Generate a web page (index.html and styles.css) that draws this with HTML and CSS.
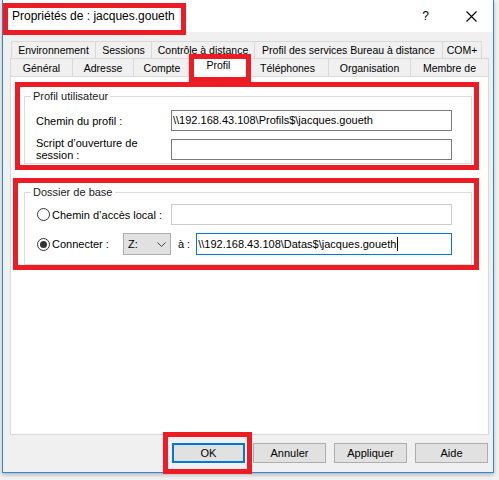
FILE: index.html
```html
<!DOCTYPE html>
<html lang="fr">
<head>
<meta charset="utf-8">
<title>Propriétés de : jacques.goueth</title>
<link rel="stylesheet" href="styles.css">
</head>
<body>
<div class="win">
  <div class="titlebar">
    <span class="title">Propriétés de : jacques.goueth</span>
    <span class="help">?</span>
    <svg class="close" width="11" height="11" viewBox="0 0 11 11"><path d="M0.5 0.5 L10.5 10.5 M10.5 0.5 L0.5 10.5" stroke="#000" stroke-width="1.1" fill="none"/></svg>
  </div>

  <div class="tabs">
    <div class="tabrow row1">
      <div class="tab w-env">Environnement</div>
      <div class="tab w-ses">Sessions</div>
      <div class="tab w-ctl">Contrôle à distance</div>
      <div class="tab w-prs">Profil des services Bureau à distance</div>
      <div class="tab w-com">COM+</div>
    </div>
    <div class="tabrow row2">
      <div class="tab w-gen">Général</div>
      <div class="tab w-adr">Adresse</div>
      <div class="tab w-cpt">Compte</div>
      <div class="tab sel w-pro">Profil</div>
      <div class="tab w-tel">Téléphones</div>
      <div class="tab w-org">Organisation</div>
      <div class="tab w-mem">Membre de</div>
    </div>
  </div>

  <div class="panel">
    <fieldset class="group g-profile">
      <legend>Profil utilisateur</legend>
      <div class="fields">
        <span class="lbl">Chemin du profil :</span>
        <div class="textbox">\\192.168.43.108\Profils$\jacques.goueth</div>
        <span class="lbl two">Script d’ouverture de<br>session :</span>
        <div class="textbox"></div>
      </div>
    </fieldset>

    <fieldset class="group g-home">
      <legend>Dossier de base</legend>
      <div class="fields">
        <div class="radioopt"><span class="radio"></span><span>Chemin d’accès local :</span></div>
        <div class="textbox dim"></div>
      </div>
      <div class="conn">
        <div class="radioopt wide"><span class="radio on"></span><span>Connecter :</span></div>
        <div class="select"><span>Z:</span><svg width="9" height="5" viewBox="0 0 9 5"><path d="M0.5 0.5 L4.5 4.5 L8.5 0.5" fill="none" stroke="#444"/></svg></div>
        <span class="a-lbl">à :</span>
        <div class="textbox focus">\\192.168.43.108\Datas$\jacques.goueth<span class="caret"></span></div>
      </div>
    </fieldset>
  </div>

  <div class="buttons">
    <div class="btn default">OK</div>
    <div class="btn">Annuler</div>
    <div class="btn">Appliquer</div>
    <div class="btn">Aide</div>
  </div>

  <div class="mark m-title"></div>
  <div class="mark m-tab"></div>
  <div class="mark m-prof"></div>
  <div class="mark m-home"></div>
  <div class="mark m-ok"></div>
</div>
</body>
</html>
```

FILE: styles.css
```css
* { box-sizing: border-box; }
html, body { margin: 0; }
body {
  width: 499px;
  height: 480px;
  overflow: hidden;
  padding-left: 2px;
  background: #f2f2f2;
  font-family: "Liberation Sans", Arial, sans-serif;
  font-size: 11px;
  color: #000;
}

.win {
  position: relative;
  width: 492px;
  height: 473px;
  background: #f0f0f0;
  border: 1px solid #2b88d8;
  border-top: 0;
  box-shadow: 0 2px 4px rgba(0, 0, 0, 0.25);
}

.titlebar {
  height: 32px;
  background: #fff;
  display: flex;
  align-items: center;
  padding: 0 16px 0 9px;
}
.title { flex: 1; font-size: 12px; }
.help { font-size: 12px; margin-right: 37px; }
.close { display: block; }

.tabs { margin-top: 9px; }
.tabrow { display: flex; align-items: flex-start; }
.row1 { height: 17px; margin-left: 8px; }
.row2 { height: 18px; margin-left: 7px; }
.tab {
  flex: none;
  border: 1px solid #d9d9d9;
  border-bottom: 0;
  background: #f0f0f0;
  text-align: center;
  white-space: nowrap;
  font-size: 10.5px;
}
.tab + .tab { margin-left: -1px; }
.row1 .tab { height: 17px; line-height: 17px; }
.row2 .tab { height: 18px; line-height: 18px; }
.row2 .tab.sel {
  height: 23px;
  margin-top: -4px;
  margin-left: -3px;
  background: #fff;
  line-height: 21px;
  z-index: 2;
}
.row2 .sel + .tab { margin-left: -3px; }

.w-env { width: 85px; }
.w-ses { width: 57px; }
.w-ctl { width: 104px; }
.w-prs { width: 189px; }
.w-com { width: 40px; }
.w-gen { width: 63px; }
.w-adr { width: 62px; }
.w-cpt { width: 58px; }
.w-pro { width: 61px; }
.w-tel { width: 83px; }
.w-org { width: 83px; }
.w-mem { width: 79px; }

.panel {
  margin-left: 7px;
  width: 479px;
  height: 359px;
  background: #fff;
  border: 1px solid #d9d9d9;
  padding-left: 13px;
}

.group {
  width: 448px;
  margin: 0;
  border: 1px solid #dcdcdc;
  min-inline-size: 0;
}
.group legend {
  padding: 0 2px;
  margin-left: -5px;
  line-height: 14px;
  color: #1a1a1a;
}
.g-profile { margin-top: 12px; padding: 7px 19px 2px 11px; }
.g-home { margin-top: 21px; padding: 5px 19px 9px 11px; }

.fields {
  display: grid;
  grid-template-columns: 135px 281px;
  row-gap: 6px;
  align-items: center;
}
.lbl.two { line-height: 12px; }

.textbox {
  height: 21px;
  border: 1px solid #7a7a7a;
  background: #fff;
  padding: 0 1px;
  line-height: 19px;
  white-space: nowrap;
  overflow: hidden;
}
.textbox.dim { border-color: #cccccc; }
.textbox.focus {
  width: 256px;
  height: 22px;
  line-height: 20px;
  border-color: #0078d7;
  margin-left: 6px;
}
.caret {
  display: inline-block;
  width: 1px;
  height: 14px;
  background: #000;
  vertical-align: -3px;
  margin-left: 1px;
}

.radioopt { display: flex; align-items: center; gap: 2px; margin-left: 1px; }
.radioopt.wide { width: 86px; }
.radio {
  width: 13px;
  height: 13px;
  border: 1px solid #333;
  border-radius: 50%;
  background: #fff;
  display: flex;
  align-items: center;
  justify-content: center;
}
.radio.on::after {
  content: "";
  width: 7px;
  height: 7px;
  border-radius: 50%;
  background: #333;
}

.conn {
  display: flex;
  align-items: center;
  height: 22px;
  margin-top: 8px;
}
.select {
  width: 48px;
  height: 22px;
  border: 1px solid #adadad;
  background: #e1e1e1;
  display: flex;
  align-items: center;
  justify-content: space-between;
  padding: 0 4px 0 4px;
}
.a-lbl { margin-left: 7px; }

.buttons {
  display: flex;
  justify-content: flex-end;
  gap: 8px;
  margin-top: 8px;
  padding-right: 5px;
}
.btn {
  width: 73px;
  height: 20px;
  border: 1px solid #adadad;
  background: #e1e1e1;
  text-align: center;
  line-height: 18px;
}
.btn.default { border: 2px solid #0078d7; line-height: 16px; }

.mark {
  position: absolute;
  border: 5px solid #ed1c24;
  z-index: 3;
}
.m-title { left: 0; top: 3px; width: 183px; height: 32px; }
.m-tab { left: 186px; top: 54px; width: 62px; height: 28px; }
.m-prof { left: 12px; top: 82px; width: 464px; height: 88px; }
.m-home { left: 10px; top: 178px; width: 466px; height: 92px; }
.m-ok { left: 160px; top: 432px; width: 89px; height: 42px; }
```
